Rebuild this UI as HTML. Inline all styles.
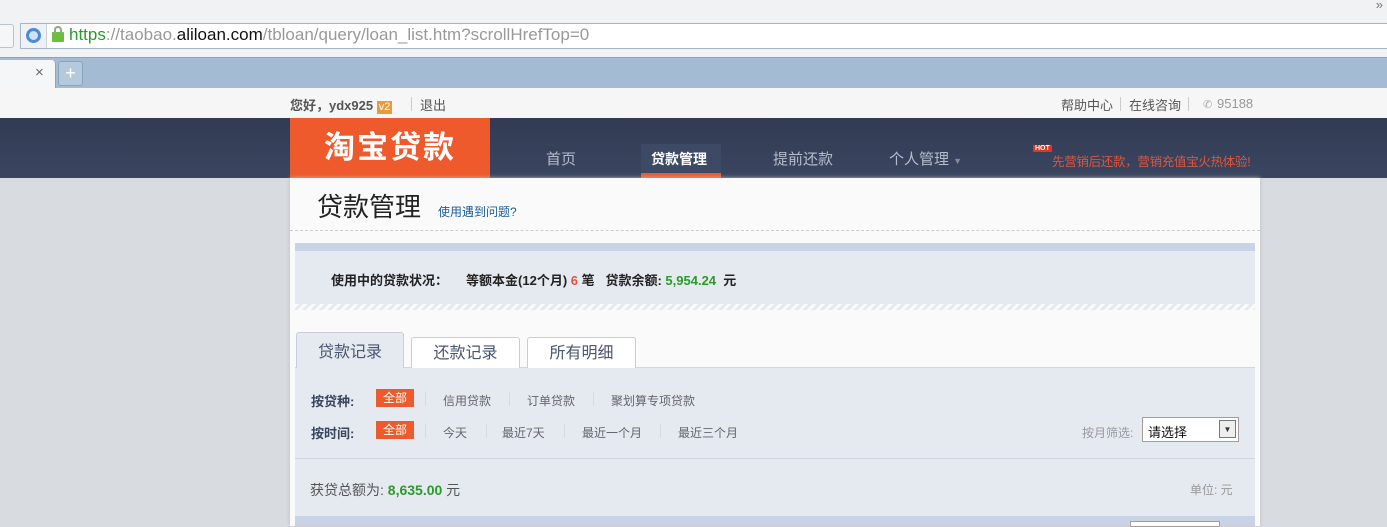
<!DOCTYPE html>
<html><head><meta charset="utf-8"><style>
*{margin:0;padding:0;box-sizing:border-box}
body{width:1387px;height:526px;overflow:hidden;background:#d8dce1;font-family:"Liberation Sans","Noto Sans CJK SC",sans-serif;font-size:12px;color:#333;position:relative}
.a{position:absolute;white-space:nowrap}
.f{color:#666;top:392px}
.g{color:#666;top:424px}
.s{width:1px;height:14px;background:#d6dbe3}
</style></head><body>
<div class="a" style="left:0;top:0;width:1387px;height:57px;background:#f1f2f4"></div>
<div class="a" style="right:4px;top:-3px;color:#777;font-size:13px">»</div>
<div class="a" style="left:-6px;top:24px;width:20px;height:24px;border:1px solid #b8c3d0;border-radius:3px;background:#f5f6f7"></div>
<div class="a" style="left:20px;top:23px;width:1370px;height:26px;border:1px solid #aab6c4;background:#fff"></div>
<div class="a" style="left:21px;top:24px;width:26px;height:24px;background:#eef1f5;border-right:1px solid #c8d0da"></div>
<div class="a" style="left:26px;top:28px;width:15px;height:15px;border-radius:50%;border:3px solid #4a8ad8;background:#cfe3f7"></div>
<div class="a" style="left:52px;top:32px;width:12px;height:10px;background:#6cbf3a;border-radius:1px"></div>
<div class="a" style="left:54px;top:26px;width:8px;height:8px;border:2px solid #8a8;border-bottom:none;border-radius:4px 4px 0 0"></div>
<div class="a" style="left:69px;top:25px;font-size:17px;color:#999"><span style="color:#2a9a2a">https</span>://taobao.<span style="color:#111">aliloan.com</span>/tbloan/query/loan_list.htm?scrollHrefTop=0</div>
<div class="a" style="left:0;top:57px;width:1387px;height:31px;background:#a3bcd3;border-top:1px solid #8aa4bc"></div>
<div class="a" style="left:0;top:60px;width:56px;height:28px;background:#f4f6f8;border-right:1px solid #8aa4bc;border-radius:0 4px 0 0"></div>
<div class="a" style="left:35px;top:64px;color:#666;font-size:15px">×</div>
<div class="a" style="left:58px;top:61px;width:25px;height:25px;border:1px solid #8aa4bc;border-radius:3px;background:#b5c9dc;color:#fff;text-align:center;font-size:18px;line-height:22px">+</div>
<div class="a" style="left:0;top:88px;width:1387px;height:30px;background:#f6f6f6"></div>
<div class="a" style="left:290px;top:95px;font-size:13px;color:#555;font-weight:bold">您好，ydx925 <span style="display:inline-block;background:#e89b3c;color:#fff;font-size:11px;padding:0 2px;font-weight:normal;line-height:13px">v2</span></div>
<div class="a" style="left:411px;top:97px;width:1px;height:14px;background:#ccc"></div>
<div class="a" style="left:420px;top:95px;font-size:13px;color:#555">退出</div>
<div class="a" style="left:1061px;top:95px;font-size:13px;color:#555">帮助中心</div>
<div class="a" style="left:1120px;top:97px;width:1px;height:14px;background:#ccc"></div>
<div class="a" style="left:1129px;top:95px;font-size:13px;color:#555">在线咨询</div>
<div class="a" style="left:1188px;top:97px;width:1px;height:14px;background:#ccc"></div>
<div class="a" style="left:1203px;top:98px;font-size:11px;color:#aaa">✆</div>
<div class="a" style="left:1217px;top:96px;font-size:13px;color:#999">95188</div>
<div class="a" style="left:0;top:118px;width:1387px;height:60px;background:linear-gradient(#323b53,#3a4560)"></div>
<div class="a" style="left:290px;top:118px;width:200px;height:60px;background:#ef5a2c;color:#fff;font-size:31px;font-weight:bold;text-align:center;line-height:60px;letter-spacing:2px">淘宝贷款</div>
<div class="a" style="left:546px;top:148px;font-size:15px;color:#b5bccb">首页</div>
<div class="a" style="left:641px;top:144px;width:80px;height:34px;background:#3e4966;border-bottom:5px solid #ef5a2c"></div>
<div class="a" style="left:651px;top:149px;font-size:14px;color:#fff;font-weight:bold">贷款管理</div>
<div class="a" style="left:773px;top:148px;font-size:15px;color:#b5bccb">提前还款</div>
<div class="a" style="left:889px;top:148px;font-size:15px;color:#b5bccb">个人管理 <span style="font-size:9px;color:#889">▼</span></div>
<div class="a" style="left:1033px;top:145px;background:#e0351e;color:#fff;font-size:7px;padding:0 2px;font-weight:bold">HOT</div>
<div class="a" style="left:1052px;top:151px;font-size:12.5px;color:#e0553c;letter-spacing:-0.3px">先营销后还款，营销充值宝火热体验!</div>
<div class="a" style="left:290px;top:178px;width:970px;height:348px;background:#fafafa;box-shadow:0 0 4px #bbb"></div>
<div class="a" style="left:317px;top:187px;font-size:26px;color:#222">贷款管理</div>
<div class="a" style="left:438px;top:203px;font-size:12px;color:#1a5c9a">使用遇到问题?</div>
<div class="a" style="left:290px;top:230px;width:970px;border-top:1px dashed #ccc"></div>
<div class="a" style="left:295px;top:243px;width:960px;height:67px;background:#e5e9f0;border-top:8px solid #c8d3e5"></div>
<div class="a" style="left:295px;top:304px;width:960px;height:6px;background:repeating-linear-gradient(135deg,#fafafa 0 3px,transparent 3px 6px)"></div>
<div class="a" style="left:331px;top:270px;font-size:13px;font-weight:bold;color:#222">使用中的贷款状况：&nbsp;&nbsp;&nbsp;&nbsp;&nbsp;等额本金(12个月) <span style="color:#e0553c">6</span> 笔&nbsp;&nbsp;&nbsp;贷款余额: <span style="color:#2a9a2a">5,954.24</span>&nbsp; 元</div>
<div class="a" style="left:295px;top:367px;width:960px;border-top:1px solid #d0d5de"></div>
<div class="a" style="left:296px;top:332px;width:108px;height:37px;background:#e5e9f0;border:1px solid #c8ced8;border-bottom:none;border-radius:3px 3px 0 0;font-size:16px;color:#4a5570;text-align:center;line-height:40px">贷款记录</div>
<div class="a" style="left:411px;top:337px;width:109px;height:31px;background:#fff;border:1px solid #c8ced8;border-bottom:none;border-radius:3px 3px 0 0;font-size:16px;color:#4a5570;text-align:center;line-height:32px">还款记录</div>
<div class="a" style="left:527px;top:337px;width:109px;height:31px;background:#fff;border:1px solid #c8ced8;border-bottom:none;border-radius:3px 3px 0 0;font-size:16px;color:#4a5570;text-align:center;line-height:32px">所有明细</div>
<div class="a" style="left:295px;top:368px;width:960px;height:90px;background:#e5e9f0"></div>
<div class="a" style="left:295px;top:458px;width:960px;height:58px;background:#e5e9f0;border-top:1px solid #d0d5de"></div>
<div class="a" style="left:295px;top:516px;width:960px;height:10px;background:#c8d3e5"></div>
<div class="a" style="left:311px;top:391px;font-size:13px;font-weight:bold;color:#3a4560">按贷种:</div>
<div class="a" style="left:376px;top:389px;width:38px;height:18px;background:#ef5a2c;color:#fff;text-align:center;line-height:18px">全部</div>
<div class="a s" style="left:425px;top:392px"></div>
<div class="a f" style="left:443px">信用贷款</div>
<div class="a s" style="left:509px;top:392px"></div>
<div class="a f" style="left:527px">订单贷款</div>
<div class="a s" style="left:593px;top:392px"></div>
<div class="a f" style="left:611px">聚划算专项贷款</div>
<div class="a" style="left:311px;top:423px;font-size:13px;font-weight:bold;color:#3a4560">按时间:</div>
<div class="a" style="left:376px;top:421px;width:38px;height:18px;background:#ef5a2c;color:#fff;text-align:center;line-height:18px">全部</div>
<div class="a s" style="left:425px;top:424px"></div>
<div class="a g" style="left:443px">今天</div>
<div class="a s" style="left:486px;top:424px"></div>
<div class="a g" style="left:502px">最近7天</div>
<div class="a s" style="left:564px;top:424px"></div>
<div class="a g" style="left:582px">最近一个月</div>
<div class="a s" style="left:660px;top:424px"></div>
<div class="a g" style="left:678px">最近三个月</div>
<div class="a" style="left:1082px;top:424px;color:#999">按月筛选:</div>
<div class="a" style="left:1142px;top:417px;width:97px;height:25px;border:1px solid #a99;background:#fff;font-size:13px;color:#111;padding:4px 5px">请选择</div>
<div class="a" style="left:1219px;top:420px;width:17px;height:18px;border:1px solid #777;background:#eee;font-size:8px;text-align:center;line-height:17px">▼</div>
<div class="a" style="left:310px;top:480px;font-size:14px;color:#555">获贷总额为: <b style="color:#2a9a2a">8,635.00</b> 元</div>
<div class="a" style="left:1190px;top:481px;color:#999">单位: 元</div>
<div class="a" style="left:1130px;top:521px;width:90px;height:6px;background:#fff;border:1px solid #a99"></div>
</body></html>
